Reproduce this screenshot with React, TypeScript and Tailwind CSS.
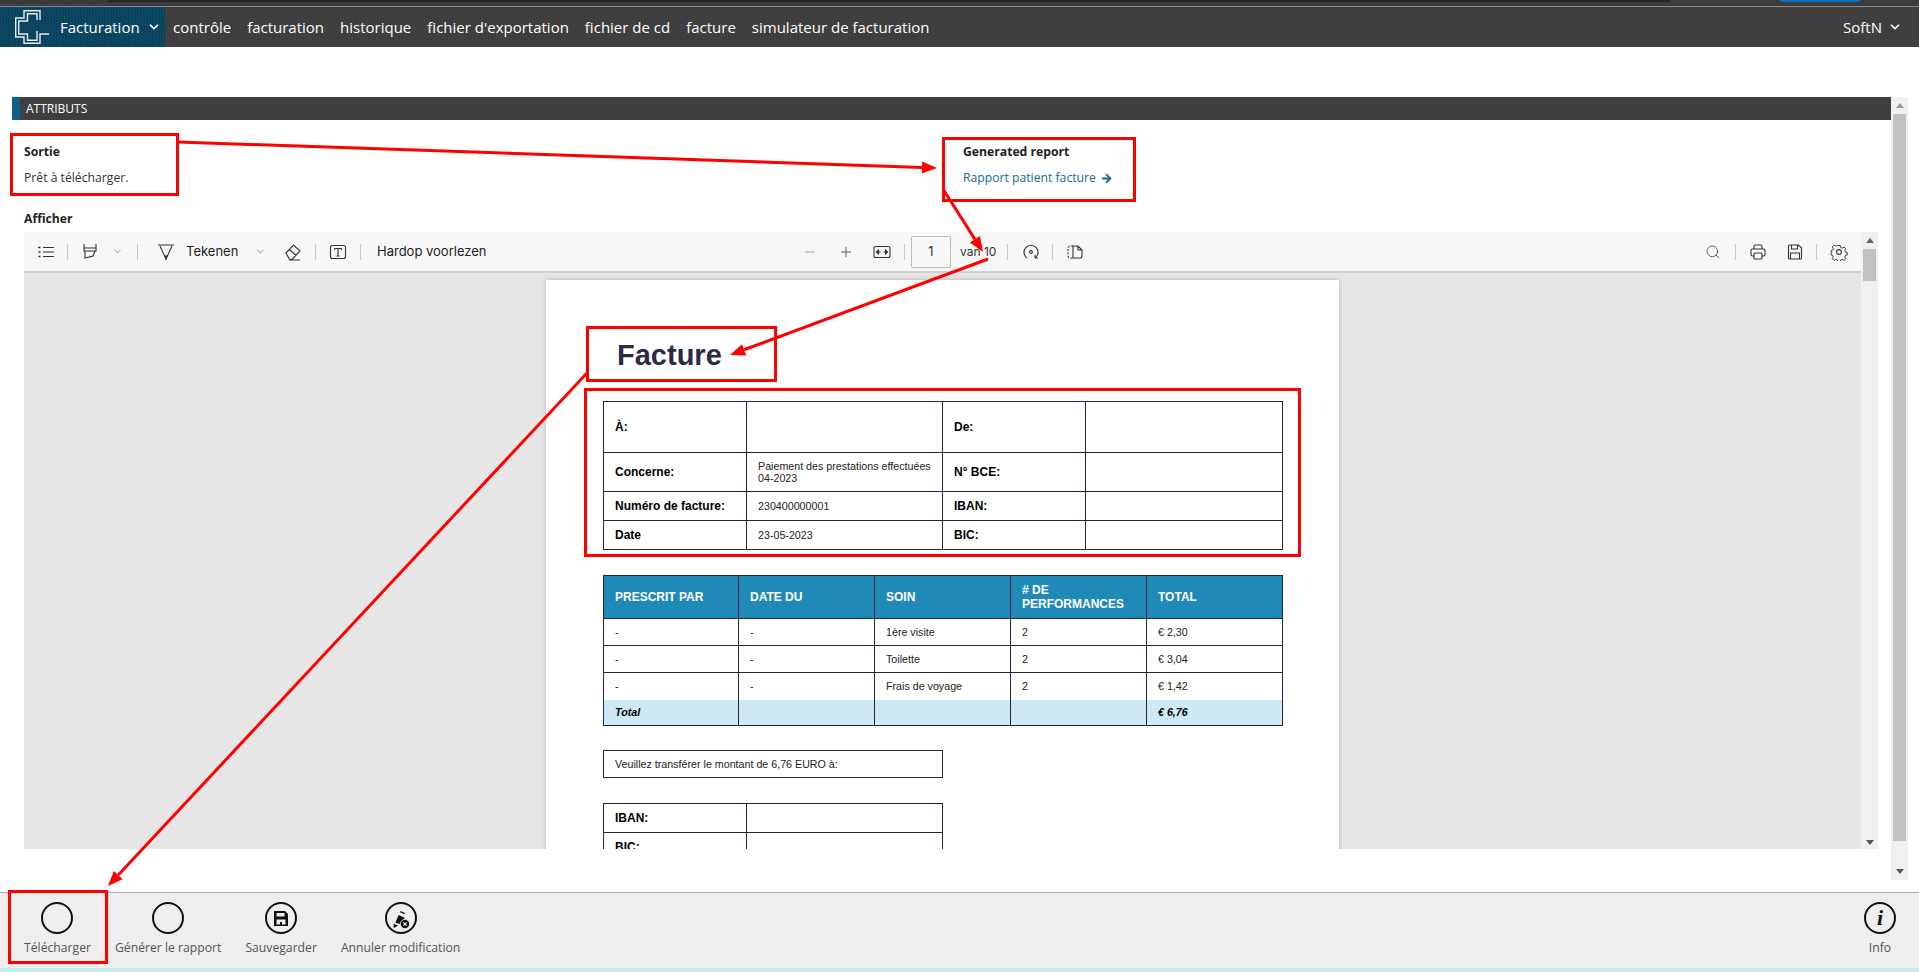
import React from "react";
import { ChevronDown, ArrowRight, Minus, Plus, Search } from "lucide-react";

const navItems = ["contrôle", "facturation", "historique", "fichier d'exportation", "fichier de cd", "facture", "simulateur de facturation"];

function Sep() {
  return <span className="block h-[16px] w-px bg-[#c8c8c8]" />;
}

function Ico({ children, w = 18 }: { children: React.ReactNode; w?: number }) {
  return (
    <svg width={w} height={18} viewBox={`0 0 ${w} 18`} fill="none" stroke="#333" strokeWidth="1.1" className="block">
      {children}
    </svg>
  );
}

function Arrow({ x1, y1, x2, y2 }: { x1: number; y1: number; x2: number; y2: number }) {
  const a = Math.atan2(y2 - y1, x2 - x1);
  const l = 15;
  const s = 6;
  const bx = x2 - l * Math.cos(a);
  const by = y2 - l * Math.sin(a);
  const px = -Math.sin(a) * s;
  const py = Math.cos(a) * s;
  return (
    <g>
      <line x1={x1} y1={y1} x2={bx} y2={by} stroke="#f00" strokeWidth="3" />
      <polygon points={`${x2},${y2} ${bx + px},${by + py} ${bx - px},${by - py}`} fill="#f00" />
    </g>
  );
}

function Annotations() {
  const boxes = [
    [11.5, 134.5, 166, 60],
    [943.5, 138.5, 191, 62],
    [587.5, 327.5, 188, 53],
    [585.5, 389.5, 714, 166],
    [9.5, 891.5, 97, 71],
  ];
  return (
    <svg className="absolute left-0 top-0 pointer-events-none" width={1919} height={972} fill="none">
      {boxes.map(([x, y, w, h], i) => (
        <rect key={i} x={x} y={y} width={w} height={h} stroke="#f00" strokeWidth="3" />
      ))}
      <Arrow x1={178} y1={142} x2={937} y2={168} />
      <Arrow x1={943} y1={189} x2={983} y2={252} />
      <Arrow x1={988} y1={259} x2={730} y2={355} />
      <Arrow x1={587} y1={373} x2={108} y2={886} />
    </svg>
  );
}

function Toolbar() {
  return (
    <div className="h-[41px] shrink-0 bg-[#f7f7f7] border-b-2 border-[#cfcfcf] flex items-center text-[13px] text-[#333] font-['Inter',sans-serif] pl-[13px] [&>*]:shrink-0">
      <Ico>
        <path d="M6 4.5h11M6 9h11M6 13.5h11" />
        <path d="M1 4.5h2.5M1.5 9h2M1.5 13.5h2" strokeWidth="1.6" />
      </Ico>
      <span className="ml-[12px]"><Sep /></span>
      <span className="ml-[14px]">
        <Ico w={16}>
          <path d="M2 1v7h12V1M2 5h12M3 8v7l8-2 2-5" />
        </Ico>
      </span>
      <span className="ml-[14px]"><ChevronDown size={11} strokeWidth={1.2} color="#444" /></span>
      <span className="ml-[14px]"><Sep /></span>
      <span className="ml-[19px]">
        <Ico>
          <path d="M1 2h16M3 3l6 13 6-13" />
          <path d="M8 13l1 3 1-3z" fill="#333" />
        </Ico>
      </span>
      <span className="ml-[11px] w-[52px] text-[#222]">Tekenen</span>
      <span className="ml-[17px]"><ChevronDown size={11} strokeWidth={1.2} color="#444" /></span>
      <span className="ml-[18px]">
        <Ico>
          <path d="M2 10l7.5-8 6.5 6-8 8.5H5.5z M5.5 6.5l6.5 6M5 17h11" />
        </Ico>
      </span>
      <span className="ml-[13px]"><Sep /></span>
      <span className="ml-[13px]">
        <Ico>
          <rect x="1.5" y="2.5" width="15" height="13" rx="2" />
          <path d="M5.5 5.5h7M9 5.5v7.5M7.5 13h3M5.5 5.5v1.5M12.5 5.5v1.5" />
        </Ico>
      </span>
      <span className="ml-[13px]"><Sep /></span>
      <span className="ml-[16px] w-[112px] text-[#222] whitespace-nowrap">Hardop voorlezen</span>

      <span className="ml-[314px]"><Minus size={14} strokeWidth={1.4} color="#888" /></span>
      <span className="ml-[21px]"><Plus size={16} strokeWidth={1.1} color="#333" /></span>
      <span className="ml-[19px]">
        <Ico>
          <rect x="1" y="3.5" width="16" height="11" rx="2" />
          <path d="M3.5 9h4M10.5 9h4" />
          <path d="M3.5 9l2-2v4zM14.5 9l-2-2v4z" fill="#333" />
        </Ico>
      </span>
      <span className="ml-[13px]"><Sep /></span>
      <span className="ml-[6px] w-[40px] h-[32px] border border-[#bdbdbd] rounded-[2px] flex items-center justify-center text-[#333]">1</span>
      <span className="ml-[9px] w-[36px] whitespace-nowrap text-[12px] text-[#333]">van 10</span>
      <span className="ml-[11px]"><Sep /></span>
      <span className="ml-[14px]">
        <Ico>
          <path d="M5 15A7 7 0 1 1 13 15M13 15v-3M13 15h3" />
          <circle cx="9" cy="9" r="1.4" />
        </Ico>
      </span>
      <span className="ml-[12px]"><Sep /></span>
      <span className="ml-[13px]">
        <Ico>
          <path d="M7 3H4a2 2 0 0 0-2 2v8a2 2 0 0 0 2 2h3" strokeDasharray="2 1.4" />
          <path d="M7 3h5l4 4v6a2 2 0 0 1-2 2H7zM12 3v4h4" />
        </Ico>
      </span>

      <span className="ml-[621px]"><Search size={16} strokeWidth={1.1} color="#333" /></span>
      <span className="ml-[14px]"><Sep /></span>
      <span className="ml-[13px]">
        <Ico>
          <path d="M5 6V3.5A1.5 1.5 0 0 1 6.5 2h5A1.5 1.5 0 0 1 13 3.5V6M5 13H3.5A1.5 1.5 0 0 1 2 11.5v-4A1.5 1.5 0 0 1 3.5 6h11A1.5 1.5 0 0 1 16 7.5v4a1.5 1.5 0 0 1-1.5 1.5H13" />
          <rect x="5" y="10" width="8" height="6" rx="1" />
        </Ico>
      </span>
      <span className="ml-[20px]">
        <Ico w={16}>
          <path d="M2.5 2h9L14.5 5v10a1 1 0 0 1-1 1h-11a1 1 0 0 1-1-1V3a1 1 0 0 1 1-1zM4.5 2v4h6V2M3.5 16V10h9v6" />
        </Ico>
      </span>
      <span className="ml-[13px]"><Sep /></span>
      <span className="ml-[13px]">
        <Ico>
          <circle cx="9" cy="9" r="2.4" />
          <path d="M7.6 1.5h2.8l.5 2.2 1.9.8 2-1.2 2 2-1.2 1.9.8 1.9 2.1.5v2.8l-2.1.4-.8 1.9 1.2 1.9-2 2-2-1.2-1.9.8-.5 1.8H7.6l-.5-1.8-1.9-.8-2 1.2-2-2 1.2-1.9-.8-1.9-1.6-.4V7.3l1.6-.5.8-1.9-1.2-1.9 2-2 2 1.2 1.9-.8z" transform="translate(1.2 1.2) scale(.87)" />
        </Ico>
      </span>
    </div>
  );
}

const line = "border border-[#23233a]";
const td = `${line} pl-[11px] pr-[4px] text-[10.7px] text-[#222] leading-[12px]`;
const th = `${line} pl-[11px] pr-[4px] text-[12px] font-bold text-black`;
const h = `${line} bg-[#1f8ab8] pl-[11px] text-left text-[12px] leading-[14px] font-bold text-white`;

function Page() {
  const rows = [
    ["-", "-", "1ère visite", "2", "€ 2,30"],
    ["-", "-", "Toilette", "2", "€ 3,04"],
    ["-", "-", "Frais de voyage", "2", "€ 1,42"],
  ];
  const f = `${line} border-t-0 bg-[#cde9f5] pl-[11px] text-[10.7px] font-bold italic text-black`;
  return (
    <div className="w-[793px] h-[800px] shrink-0 bg-white shadow-[0_0_4px_rgba(0,0,0,0.25)] font-['Liberation_Sans',Arial,sans-serif] pl-[57px] pt-[57px]">
      <h1 className="pl-[14px] h-[36px] leading-[36px] text-[29px] font-bold text-[#2b2b45] mb-[28px]">Facture</h1>
      <table className="table-fixed border-collapse w-[680px]">
        <tbody>
          <tr className="h-[51px]">
            <th className={`${th} w-[143px] text-left`}>À:</th>
            <td className={`${td} w-[196px] align-top text-center`}><span className="block text-[5px] leading-[8px] text-[#888] pt-[4px]">.</span></td>
            <th className={`${th} w-[143px] text-left`}>De:</th>
            <td className={td}></td>
          </tr>
          <tr className="h-[39px]">
            <th className={`${th} text-left`}>Concerne:</th>
            <td className={td}>Paiement des prestations effectuées 04-2023</td>
            <th className={`${th} text-left`}>N° BCE:</th>
            <td className={td}></td>
          </tr>
          <tr className="h-[29px]">
            <th className={`${th} text-left`}>Numéro de facture:</th>
            <td className={td}>230400000001</td>
            <th className={`${th} text-left`}>IBAN:</th>
            <td className={td}></td>
          </tr>
          <tr className="h-[29px]">
            <th className={`${th} text-left`}>Date</th>
            <td className={td}>23-05-2023</td>
            <th className={`${th} text-left`}>BIC:</th>
            <td className={td}></td>
          </tr>
        </tbody>
      </table>

      <table className="table-fixed border-collapse w-[680px] mt-[25px]">
        <thead>
          <tr className="h-[43px]">
            <th className={`${h} w-[135px]`}>PRESCRIT PAR</th>
            <th className={`${h} w-[136px]`}>DATE DU</th>
            <th className={`${h} w-[136px]`}>SOIN</th>
            <th className={`${h} w-[136px]`}># DE PERFORMANCES</th>
            <th className={h}>TOTAL</th>
          </tr>
        </thead>
        <tbody>
          {rows.map((r, i) => (
            <tr key={i} className="h-[27px]">
              {r.map((c, j) => (
                <td key={j} className={`${td} ${i === 2 ? "border-b-0" : ""}`}>{c}</td>
              ))}
            </tr>
          ))}
          <tr className="h-[26px]">
            <td className={f}>Total</td>
            <td className={f}></td>
            <td className={f}></td>
            <td className={f}></td>
            <td className={f}>€ 6,76</td>
          </tr>
        </tbody>
      </table>

      <div className={`${line} w-[340px] h-[28px] mt-[24px] flex items-center pl-[11px] text-[10.7px] text-[#222]`}>
        Veuillez transférer le montant de 6,76 EURO à:
      </div>

      <table className="table-fixed border-collapse w-[340px] mt-[25px]">
        <tbody>
          <tr className="h-[29px]">
            <th className={`${th} w-[143px] text-left`}>IBAN:</th>
            <td className={td}></td>
          </tr>
          <tr className="h-[29px]">
            <th className={`${th} text-left`}>BIC:</th>
            <td className={td}></td>
          </tr>
        </tbody>
      </table>
    </div>
  );
}

function Ring({ children }: { children?: React.ReactNode }) {
  return (
    <span className="w-[32px] h-[32px] rounded-full border-2 border-[#111] flex items-center justify-center">
      {children}
    </span>
  );
}

function FootBtn({ label, icon }: { label: string; icon?: React.ReactNode }) {
  return (
    <div className="flex flex-col items-center px-[12px] pt-[9px]">
      <Ring>{icon}</Ring>
      <span className="mt-[4px] text-[12.2px] leading-[20px] text-[#555] whitespace-nowrap">{label}</span>
    </div>
  );
}

export default function App() {
  return (
    <div className="relative h-[972px] w-full overflow-hidden bg-white flex flex-col font-['Open_Sans',sans-serif]">
      <div className="h-[6px] shrink-0 bg-[#3c3c3c] flex">
        <span className="ml-[108px] w-[1562px] h-[2px] bg-[#262626]" />
        <span className="ml-[110px] w-[80px] h-[2px] bg-[#0d6fc4] rounded-b" />
      </div>
      <div className="h-px shrink-0 bg-[#8a8a8a]" />

      <nav className="h-[40px] shrink-0 flex items-center text-white text-[15px] bg-[#3e3e3e] bg-[repeating-conic-gradient(#414141_0_25%,#3c3c3c_0_50%)] bg-[length:3px_3px]">
        <div className="w-[165px] h-full flex items-center bg-[#0b4a66] bg-[repeating-conic-gradient(#0c4a66_0_25%,#083f58_0_50%)] bg-[length:3px_3px] pl-[15px]">
          <svg width="34" height="34" viewBox="0 0 34 34" fill="none" stroke="#e4ecef" strokeWidth="1.4" className="shrink-0">
            <path d="M25 10V0.7H9V8H0.7V27H9V33.3H25V24H34" />
            <path d="M22 10V3.7H12.5V11H3.7V24H12.5V30.3H22V21" />
          </svg>
          <span className="ml-[11px]">Facturation</span>
          <ChevronDown size={14} strokeWidth={3} className="ml-[7px]" />
        </div>
        <div className="flex items-center gap-[16px] ml-[8px]">
          {navItems.map((n) => (
            <span key={n} className="whitespace-nowrap">{n}</span>
          ))}
        </div>
        <div className="ml-auto flex items-center pr-[17px]">
          <span>SoftN</span>
          <ChevronDown size={14} strokeWidth={3} className="ml-[6px]" />
        </div>
      </nav>

      <main className="flex-1 min-h-0 flex pl-[12px] pt-[50px] pb-[12px]">
        <div className="w-[1879px] shrink-0 flex flex-col">
          <div className="h-[23px] shrink-0 bg-[#3e3e3e] bg-[repeating-conic-gradient(#414141_0_25%,#3c3c3c_0_50%)] bg-[length:3px_3px] border-l-[8px] border-[#0f6187] pl-[6px] flex items-center text-[12px] text-white">
            ATTRIBUTS
          </div>
          <div className="pl-[12px] pt-[22px] flex text-[12.2px] leading-[20px] text-[#333]">
            <div className="w-[939px]">
              <div className="font-bold text-[#222]">Sortie</div>
              <div className="mt-[6px]">Prêt à télécharger.</div>
            </div>
            <div>
              <div className="font-bold text-[#222]">Generated report</div>
              <div className="mt-[6px] flex items-center text-[#1c6a8e]">
                Rapport patient facture
                <ArrowRight size={13} strokeWidth={3.4} className="ml-[4px]" />
              </div>
            </div>
          </div>
          <div className="pl-[12px] mt-[21px] mb-[3px] text-[12.2px] leading-[20px] font-bold text-[#222]">Afficher</div>
          <div className="ml-[12px] w-[1854px] h-[617px] flex">
            <div className="w-[1837px] flex flex-col">
              <Toolbar />
              <div className="flex-1 min-h-0 overflow-hidden bg-[#e6e6e6] flex justify-center pt-[7px]">
                <Page />
              </div>
            </div>
            <div className="w-[17px] bg-[#f0f0f0] flex flex-col items-center pt-[6px] pb-[4px]">
              <span className="w-0 h-0 border-x-[4px] border-x-transparent border-b-[5px] border-b-[#666]" />
              <span className="mt-[6px] w-[13px] h-[32px] bg-[#c1c1c1]" />
              <span className="mt-auto w-0 h-0 border-x-[4px] border-x-transparent border-t-[5px] border-t-[#555]" />
            </div>
          </div>
        </div>
        <div className="w-[17px] shrink-0 bg-[#f0f0f0] flex flex-col items-center pt-[6px] pb-[6px]">
          <span className="w-0 h-0 border-x-[4px] border-x-transparent border-b-[5px] border-b-[#999]" />
          <span className="mt-[6px] w-[13px] h-[727px] bg-[#c1c1c1]" />
          <span className="mt-auto w-0 h-0 border-x-[4px] border-x-transparent border-t-[5px] border-t-[#555]" />
        </div>
      </main>

      <footer className="h-[76px] shrink-0 bg-[#eeeeee] border-t border-[#ababab] flex pl-[12px] pr-[11px]">
        <FootBtn label="Télécharger" />
        <FootBtn label="Générer le rapport" />
        <FootBtn
          label="Sauvegarder"
          icon={
            <svg width="16" height="17" viewBox="0 0 16 17" fill="#111">
              <path fillRule="evenodd" d="M1 1h11l3 3v12H1zM3.5 3v3.5h8V3zM3.5 9.5V14.5h9V9.5z" />
              <rect x="7" y="12" width="2" height="3" />
            </svg>
          }
        />
        <FootBtn
          label="Annuler modification"
          icon={
            <svg width="24" height="24" viewBox="-1 -1 24 24" fill="#111" className="overflow-visible">
              <path d="M10.3 4.7l4.4 2" stroke="#111" strokeWidth="1.3" />
              <path d="M8.7 8l6 2.7-3.7 6.6-5.7-1.6z" />
              <path d="M3.7 16.7v4.3l4.3-2.3z" />
              <circle cx="15" cy="17" r="4.6" stroke="#eee" strokeWidth="0.8" />
              <path d="M13.3 15.3l3.4 3.4M16.7 15.3l-3.4 3.4" stroke="#eee" strokeWidth="1.2" />
            </svg>
          }
        />
        <div className="ml-auto">
          <FootBtn
            label="Info"
            icon={<span className="font-['Liberation_Serif',serif] italic font-bold text-[22px] leading-none text-[#111]">i</span>}
          />
        </div>
      </footer>
      <div className="h-[4px] shrink-0 bg-[#c9ecec]" />
      <Annotations />
    </div>
  );
}
